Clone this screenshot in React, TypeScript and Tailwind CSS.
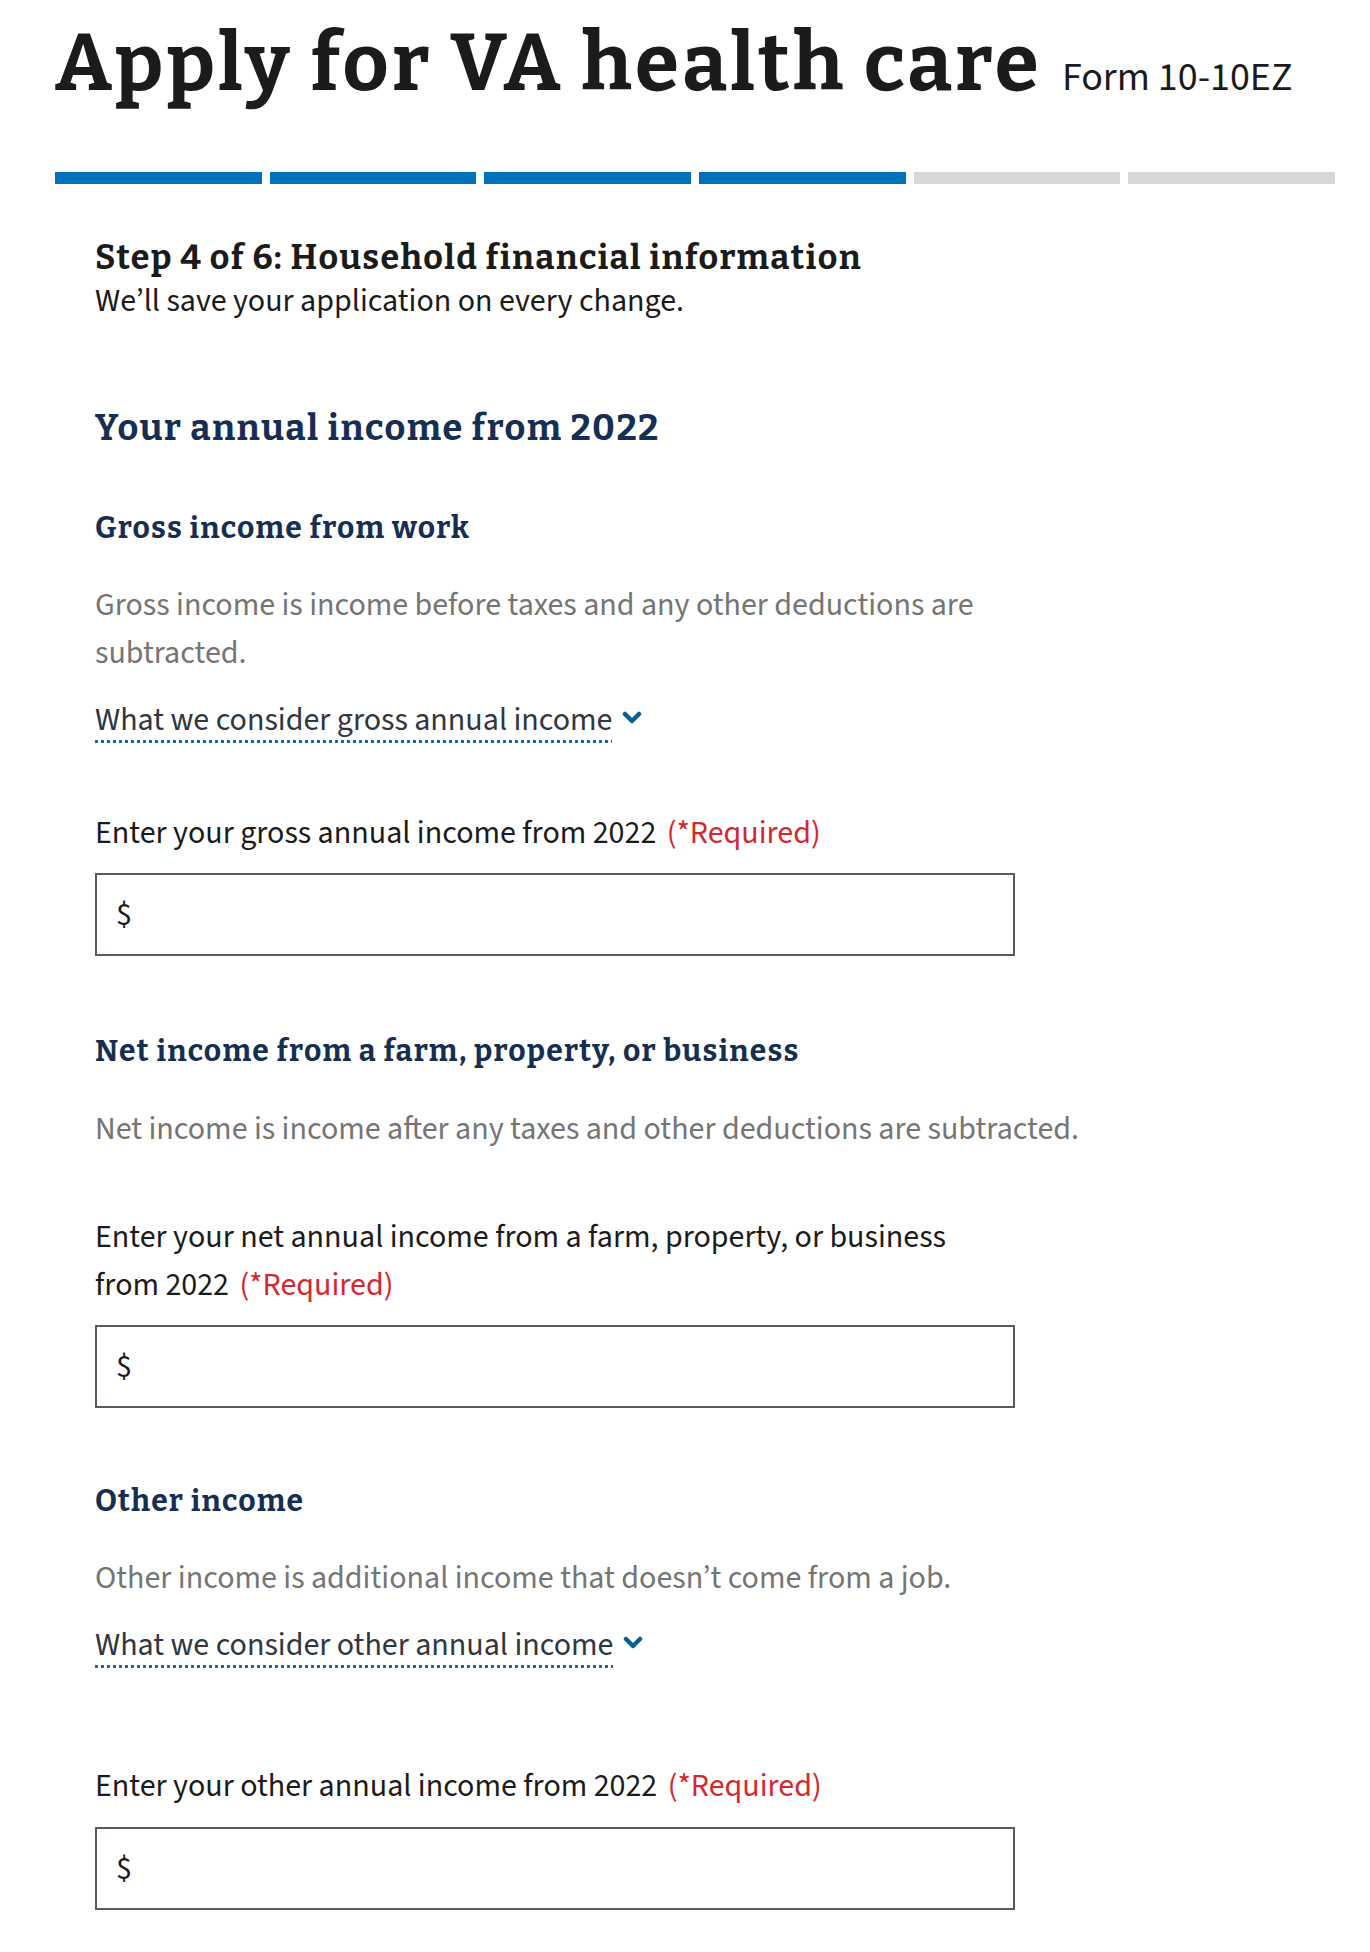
const serif = "font-['Bitter','DejaVu_Serif',serif] font-bold tracking-[0.04em]"
const sans = "font-['Source_Sans_3','Lato',sans-serif]"

function Chevron() {
  return (
    <svg width="20" height="13" viewBox="0 0 20 13" className="ml-[10px] mb-[5px] shrink-0" aria-hidden>
      <path d="M3 3 L10 10 L17 3" fill="none" stroke="#0b5f91" strokeWidth="4.5" strokeLinecap="round" strokeLinejoin="round" />
    </svg>
  )
}

function Disclosure({ text, className }: { text: string; className: string }) {
  return (
    <div className={`flex items-center ${className}`}>
      <span className="text-[32px] leading-[48px] text-[#2f3742] underline decoration-dotted decoration-[#0b6ba3] decoration-[3px] underline-offset-[10px]">
        {text}
      </span>
      <Chevron />
    </div>
  )
}

function Required() {
  return <span className="ml-1 text-[#d3282f]">(*Required)</span>
}

function MoneyInput({ className }: { className: string }) {
  return (
    <div className={`flex items-center w-[920px] h-[83px] border-2 border-[#565c65] pl-[19px] ${className}`}>
      <span className="text-[32px] text-[#1b1b1b]">$</span>
      <input className="flex-1 h-full outline-none bg-transparent text-[32px] px-2" aria-label="amount" />
    </div>
  )
}

export default function App() {
  return (
    <div className={`min-h-[1952px] bg-white pl-[55px] pt-[15px] text-[#1b1b1b] ${sans}`}>
      <div className="flex items-baseline gap-[20px]">
        <h1 className={`text-[80px] leading-[96px] text-[#1b1b1b] ${serif}`}>Apply for VA health care</h1>
        <span className="text-[40px] leading-[48px]">Form 10-10EZ</span>
      </div>

      <div className="mt-[61px] flex gap-2 w-[1280px]">
        <div className="h-3 flex-1 bg-[#0071bb]" />
        <div className="h-3 flex-1 bg-[#0071bb]" />
        <div className="h-3 flex-1 bg-[#0071bb]" />
        <div className="h-3 flex-1 bg-[#0071bb]" />
        <div className="h-3 flex-1 bg-[#d6d7d9]" />
        <div className="h-3 flex-1 bg-[#d6d7d9]" />
      </div>

      <div className="pl-10">
        <h2 className={`mt-[55px] text-[34px] leading-[38px] text-[#1b1b1b] ${serif}`}>
          Step 4 of 6: Household financial information
        </h2>
        <p className="text-[32px] leading-[48px]">We’ll save your application on every change.</p>

        <h3 className={`mt-[81px] text-[36px] leading-[44px] text-[#162e51] ${serif}`}>Your annual income from 2022</h3>

        {/* gross income */}
        <h4 className={`mt-[60px] text-[30px] leading-[36px] text-[#162e51] ${serif}`}>Gross income from work</h4>
        <p className="mt-[35px] text-[32px] leading-[48px] text-[#757575]">
          Gross income is income before taxes and any other deductions are
          <br />
          subtracted.
        </p>
        <Disclosure text="What we consider gross annual income" className="mt-[19px]" />
        <label className="block mt-[65px] text-[32px] leading-[48px]">
          Enter your gross annual income from 2022 <Required />
        </label>
        <MoneyInput className="mt-[16px]" />

        {/* net income */}
        <h4 className={`mt-[77px] text-[30px] leading-[36px] text-[#162e51] ${serif}`}>
          Net income from a farm, property, or business
        </h4>
        <p className="mt-[36px] text-[32px] leading-[48px] text-[#757575]">
          Net income is income after any taxes and other deductions are subtracted.
        </p>
        <label className="block mt-[60px] text-[32px] leading-[48px]">
          Enter your net annual income from a farm, property, or business
          <br />
          from 2022 <Required />
        </label>
        <MoneyInput className="mt-[16px]" />

        {/* other income */}
        <h4 className={`mt-[75px] text-[30px] leading-[36px] text-[#162e51] ${serif}`}>Other income</h4>
        <p className="mt-[35px] text-[32px] leading-[48px] text-[#757575]">
          Other income is additional income that doesn’t come from a job.
        </p>
        <Disclosure text="What we consider other annual income" className="mt-[19px]" />
        <label className="block mt-[93px] text-[32px] leading-[48px]">
          Enter your other annual income from 2022 <Required />
        </label>
        <MoneyInput className="mt-[17px]" />
      </div>
    </div>
  )
}
